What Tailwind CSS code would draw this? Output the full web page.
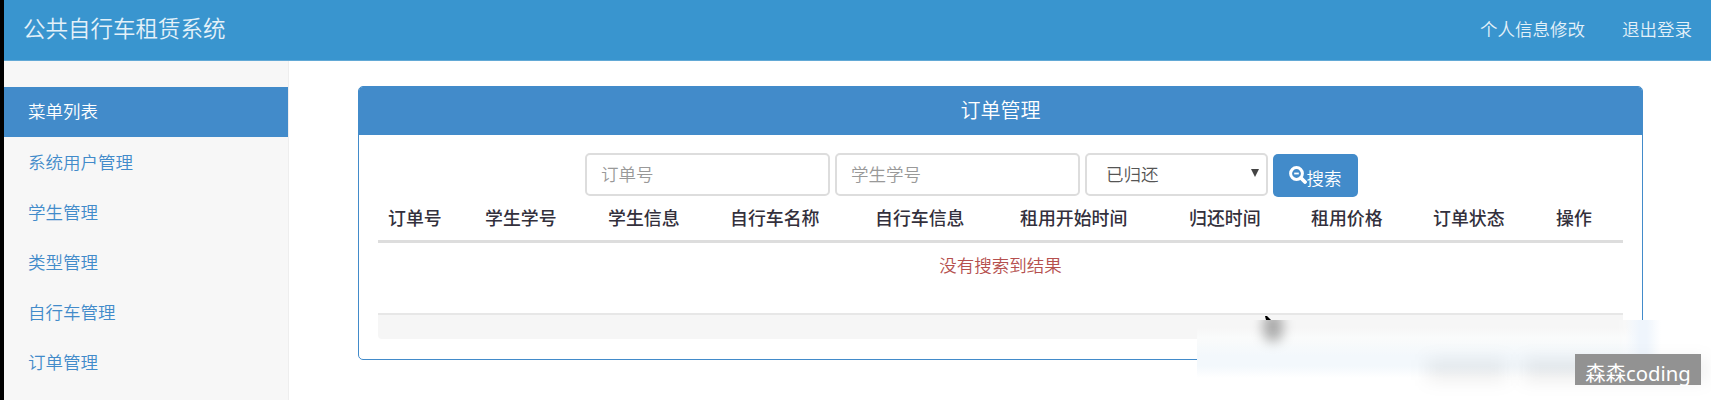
<!DOCTYPE html>
<html lang="zh">
<head>
<meta charset="utf-8">
<title>公共自行车租赁系统</title>
<script src="https://cdn.jsdelivr.net/npm/@tailwindcss/browser@4"></script>
</head>
<body class="relative h-[400px] w-[1711px] overflow-hidden bg-white pl-1 font-['Noto_Sans_CJK_SC',sans-serif] text-[17.5px] font-[350] leading-[25px] text-[#333]">
<div class="absolute inset-y-0 left-0 w-1 bg-black"></div>
<header class="flex h-[61px] items-center justify-between border-b border-[#62a9d6] bg-[#3995cf] pb-[3px] pl-[19px] pr-[19px] text-[#e4f1f9]">
  <h1 class="pb-[2px] text-[22.5px] font-[350]">公共自行车租赁系统</h1>
  <nav class="flex gap-[37px]"><a>个人信息修改</a><a>退出登录</a></nav>
</header>
<div class="flex h-[339px]">
  <aside class="w-[285px] shrink-0 border-r border-[#eee] bg-[#f7f7f7] pt-[26px] text-[#428bca]">
    <ul>
      <li class="flex h-[50px] items-center bg-[#428bca] pb-[3px] pl-6 text-white">菜单列表</li>
      <li class="flex h-[50px] items-center pb-[2px] pl-6">系统用户管理</li>
      <li class="flex h-[50px] items-center pb-[2px] pl-6">学生管理</li>
      <li class="flex h-[50px] items-center pb-[2px] pl-6">类型管理</li>
      <li class="flex h-[50px] items-center pb-[2px] pl-6">自行车管理</li>
      <li class="flex h-[50px] items-center pb-[2px] pl-6">订单管理</li>
    </ul>
  </aside>
  <main class="pl-[69px] pt-[25px]">
    <section class="h-[274px] w-[1285px] rounded-[5px] border border-[#428bca]">
      <h2 class="flex h-12 items-center justify-center rounded-t-[4px] bg-[#428bca] pb-[4px] text-[20px] text-white">订单管理</h2>
      <div class="px-[19px] pt-[18px]">
        <form class="flex h-[44px] gap-[5px] pl-[207px]">
          <div class="flex h-[43px] w-[245px] items-center rounded-[5px] border-2 border-[#ddd] pb-[2px] pl-[14px] text-[#999]">订单号</div>
          <div class="flex h-[43px] w-[245px] items-center rounded-[5px] border-2 border-[#ddd] pb-[2px] pl-[14px] text-[#999]">学生学号</div>
          <div class="flex h-[43px] w-[183px] items-center justify-between rounded-[5px] border-2 border-[#ddd] pb-[2px] pl-[19px] pr-[7px] text-[#555]">已归还
            <svg class="mb-px h-[8px] w-[8px]" viewBox="0 0 8 8"><path d="M0 0h8L4 8z" fill="#444"/></svg>
          </div>
          <button class="mt-px flex h-[43px] w-[85px] items-center rounded-[5px] bg-[#428bca] pl-4 text-white">
            <svg class="mb-[2px] h-[18px] w-[18px] shrink-0" viewBox="0 0 18 18" fill="none" stroke="#fff"><circle cx="7.5" cy="7.5" r="5.9" stroke-width="3"/><path d="M5.2 7.5h4.6" stroke-width="1.8"/><path d="M12 12l4 4" stroke-width="3.8" stroke-linecap="round"/></svg><span class="mt-[4px] -ml-[0.5px]">搜索</span>
          </button>
        </form>
        <div class="grid h-[46px] grid-cols-[97px_123px_122px_145px_145px_169px_122px_122px_123px_77px] border-b-[3px] border-[#ddd] pt-[8px] text-[17.9px] text-[#33303c]">
          <b class="pl-[10px] font-medium">订单号</b><b class="pl-[10px] font-medium">学生学号</b><b class="pl-[10px] font-medium">学生信息</b><b class="pl-[10px] font-medium">自行车名称</b><b class="pl-[10px] font-medium">自行车信息</b><b class="pl-[10px] font-medium">租用开始时间</b><b class="pl-[10px] font-medium">归还时间</b><b class="pl-[10px] font-medium">租用价格</b><b class="pl-[10px] font-medium">订单状态</b><b class="pl-[10px] font-medium">操作</b>
        </div>
        <p class="h-[70px] pt-[9px] text-center text-[#b5504e]">没有搜索到结果</p>
        <div class="h-[26px] rounded-b-[4px] border-t-2 border-[#e7e7e7] bg-[#f6f6f6]"></div>
      </div>
    </section>
  </main>
</div>
<svg class="absolute left-[1265px] top-[316px] h-1 w-[6px]" viewBox="0 0 6 4"><path d="M0 0h2l4 4H1z" fill="#000"/></svg>
<div class="absolute left-[1197px] top-[320px] h-20 w-[514px] overflow-hidden bg-white">
  <div class="absolute left-0 top-0 h-[60px] w-[458px] bg-[linear-gradient(to_bottom,#f6f6f6_0px,#f6f6f6_7px,#fafbfb_18px,#f3f8fc_36px,#f3f8fc_46px,#fff_58px)] [mask-image:linear-gradient(to_right,#000_420px,transparent_458px)]"></div>
  <div class="absolute left-[428px] top-0 h-[54px] w-[36px] bg-[linear-gradient(to_right,transparent,#eff5fc_40%,#eff5fc_60%,transparent)]"></div>
  <div class="absolute left-[66px] top-[-8px] h-[30px] w-[20px] rounded-full bg-black/30 blur-[6px]"></div>
  <div class="absolute left-[230px] top-[40px] h-[20px] w-[80px] bg-black/7 blur-[9px]"></div>
  <div class="absolute left-[326px] top-[40px] h-[20px] w-[182px] bg-black/8 blur-[9px]"></div>
</div>
<div class="absolute left-[1575px] top-[354px] flex h-[31px] w-[126px] items-center justify-center bg-[#929292] pt-2 font-['Noto_Sans','Noto_Sans_CJK_SC',sans-serif] text-[20.3px] font-normal text-white">森森coding</div>
</body>
</html>
